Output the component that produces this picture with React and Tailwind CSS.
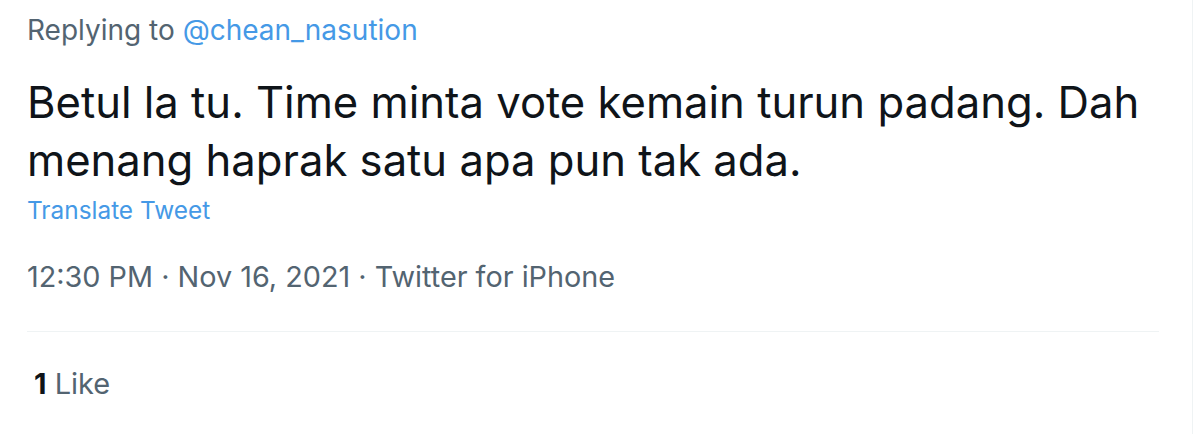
import React from 'react';

export default function App() {
  return (
    <div className="w-[1200px] h-[434px] bg-white overflow-hidden flex" style={{ fontFamily: 'Inter, "Noto Sans", sans-serif' }}>
      <div className="w-[1193px] border-r border-[#eff3f4] pl-[27px] pr-[33px] flex flex-col">
        <div className="mt-[12px] text-[28px] leading-[36px] text-[#536471]">
          Replying to <span className="text-[#4599e6]">@chean_nasution</span>
        </div>

        <p className="mt-[26px] text-[43.6px] leading-[58px] text-[#0f1419]">
          Betul la tu. Time minta vote kemain turun padang. Dah menang haprak satu apa pun tak ada.
        </p>

        <div className="mt-[5px] text-[24.4px] leading-[30px] text-[#4599e6]">Translate Tweet</div>

        <div className="mt-[35px] text-[28.8px] leading-[34px] text-[#536471]">
          12:30 PM · Nov 16, 2021 · Twitter for iPhone
        </div>

        <div className="mt-[37px] border-t border-[#eff3f4]" />

        <div className="mt-[35px] pl-[7px] text-[29px] leading-[34px] text-[#536471]">
          <span className="font-bold text-[#0f1419]">1</span> Like
        </div>
      </div>
    </div>
  );
}
